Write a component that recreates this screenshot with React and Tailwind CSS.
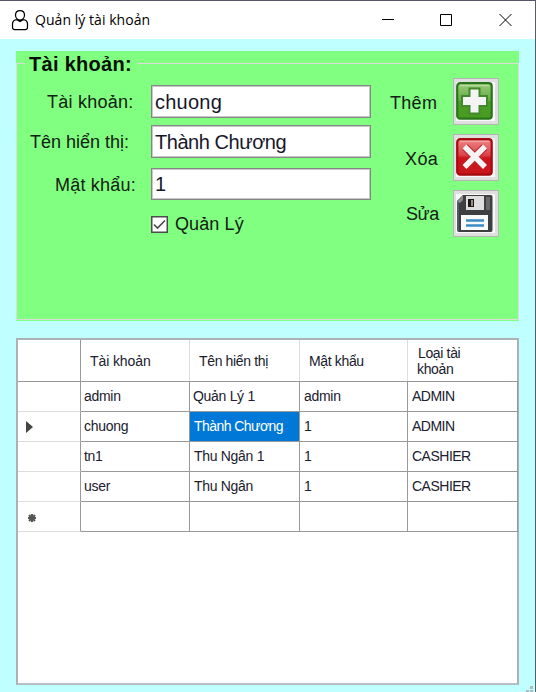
const fields = [
  { label: 'Tài khoản:', value: 'chuong', row: 'h-[33px] mb-[7px]', pad: 'pl-[29px]', shift: 'pl-[2px]', spacing: 'tracking-[0.25px]', field: 'tracking-[0.25px]' },
  { label: 'Tên hiển thị:', value: 'Thành Chương', row: 'h-[33px] mb-[10px]', pad: 'pl-[12px]', shift: 'pl-[2px]', spacing: 'tracking-[0px]', field: 'tracking-[-0.45px]' },
  { label: 'Mật khẩu:', value: '1', row: 'h-[32px]', pad: 'pl-[37px]', shift: 'pl-[2px]', spacing: 'tracking-[0.2px]', field: '' },
];

const rows = [
  { mark: '', cells: ['admin', 'Quản Lý 1', 'admin', 'ADMIN'] },
  { mark: 'current', cells: ['chuong', 'Thành Chương', '1', 'ADMIN'] },
  { mark: '', cells: ['tn1', 'Thu Ngân 1', '1', 'CASHIER'] },
  { mark: '', cells: ['user', 'Thu Ngân', '1', 'CASHIER'] },
  { mark: 'new', cells: ['', '', '', ''] },
];

function AddIcon() {
  return (
    <svg width="38" height="39" viewBox="0 0 38 39">
      <defs>
        <linearGradient id="add" x2="0" y2="1">
          <stop stopColor="#9acb7b" /><stop offset=".48" stopColor="#65ad43" /><stop offset=".52" stopColor="#4a9e25" /><stop offset="1" stopColor="#479b20" />
        </linearGradient>
      </defs>
      <rect x="1.2" y="1.2" width="34.500" height="35.500" rx="3" fill="url(#add)" stroke="#28761b" strokeWidth="2.2" />
      <path d="M4 3.500H33" stroke="#b7dc9b" strokeWidth="1.5" />
      <path d="M12.500 5.500h12v7.500h7.500v12h-7.500v7.500h-12v-7.500H5v-12h7.500z" fill="#43882d" />
      <path d="M14.500 7.500h8v7.500h7.500v8h-7.500v7.500h-8v-7.500H7v-8h7.500z" fill="#f4f4f4" />
    </svg>
  );
}

function DeleteIcon() {
  return (
    <svg width="38" height="39" viewBox="0 0 38 39">
      <defs>
        <linearGradient id="del" x2="0" y2="1">
          <stop stopColor="#ee8585" /><stop offset=".45" stopColor="#dc4349" /><stop offset=".53" stopColor="#cc141b" /><stop offset="1" stopColor="#c8161b" />
        </linearGradient>
      </defs>
      <rect x="1.2" y="1.2" width="34.500" height="35.500" rx="3" fill="url(#del)" stroke="#a4090e" strokeWidth="2.2" />
      <path d="M4 3.500H33" stroke="#f4a4a4" strokeWidth="1.2" />
      <path d="M9 9L28.500 28.500M28.500 9L9 28.500" stroke="#b9282e" strokeWidth="7.500" />
      <path d="M8.500 8.500L29 29M29 8.500L8.500 29" stroke="#f5f3f3" strokeWidth="5.500" />
    </svg>
  );
}

function SaveIcon() {
  return (
    <svg width="38" height="39" viewBox="0 0 38 39">
      <path d="M7 1H35Q36.500 1 36.500 3V36Q36.500 38 35 38H3Q1 38 1 36V7z" fill="#3d3f41" />
      <path d="M1 8L7 1v5L4 9z" fill="#8b8d8f" />
      <path d="M2 8v29" stroke="#606264" strokeWidth="1.5" />
      <path d="M30 3h4v13h-4z" fill="#66686a" />
      <rect x="10" y="2" width="18" height="14" fill="#dedede" />
      <rect x="12" y="5" width="6" height="8" fill="#171717" />
      <rect x="15" y="6" width="2" height="6" fill="#9b8f80" />
      <rect x="5" y="21" width="27" height="15" fill="#f9fafc" />
      <path d="M10 26.500h18M10 31.500h18" stroke="#3b8bc4" strokeWidth="2.600" />
    </svg>
  );
}

function Action({ label, pad, Icon, className }) {
  return (
    <div className={`flex h-[47px] items-center justify-between ${className}`}>
      <span className={`whitespace-nowrap text-[18px] leading-6 ${pad}`}>{label}</span>
      <button className="flex h-[47px] w-[46px] border border-[#b4b4b4] bg-[#dfdfdf] p-[3px] pl-[2px]">
        <span className="block h-[39px] w-[39px] bg-[#f8f8f8]"><Icon /></span>
      </button>
    </div>
  );
}

export default function App() {
  return (
    <div className="flex h-[692px] w-[536px] flex-col overflow-hidden border-t border-r border-t-[#55556b] border-r-[#535f64] bg-[#c0ffff] font-['Liberation_Sans',sans-serif] text-[#142014]">
      <header className="flex h-[38px] shrink-0 items-center bg-white text-black">
        <svg className="ml-[11px]" width="18" height="22" viewBox="0 0 18 22" fill="none" stroke="black" strokeWidth="1.25">
          <path d="M9 1.500C6 1.500 4.500 3.500 4.500 6S6.200 11 9 11s4.500-2.500 4.500-5S12 1.500 9 1.500zM6 10.700c-3 .2-4.500 1.700-4.500 4.300v3.300c0 1.200.8 2.200 2 2.200h11c1.200 0 2-1 2-2.200V15c0-2.600-1.500-4.100-4.500-4.300M6 10.800l3 1.800 3-1.800" />
        </svg>
        <h1 className="ml-[6px] whitespace-nowrap font-['Open_Sans',sans-serif] text-[14px] leading-5 tracking-[0.05px]">Quản lý tài khoản</h1>
        <svg className="ml-auto mr-[23px]" width="131" height="14" viewBox="0 0 131 14" fill="none" stroke="black">
          <path d="M1 6.500h12M59.500 1.500h11v11h-11zM118.500 1l12 12M130.500 1l-12 12" />
        </svg>
      </header>

      <main className="flex flex-1 flex-col pt-3 pl-4">
        <section className="h-[270px] w-[503px] bg-[#80ff80] pt-[12px]">
          <div className="flex h-[257px] w-[503px] flex-col border border-[#dcdcdc]">
            <h2 className="-mt-[13px] ml-[8px] h-6 w-[112px] whitespace-nowrap bg-[#80ff80] pl-[4px] text-[20px] font-bold leading-[27px] tracking-[0.3px] text-[#051005]">Tài khoản:</h2>
            <div className="flex pl-px">
              <form className="w-[353px] pt-[10px]">
                {fields.map((f) => (
                  <div key={f.label} className={`flex items-center ${f.row}`}>
                    <label className={`w-[133px] shrink-0 whitespace-nowrap pt-px text-[18px] leading-6 ${f.pad} ${f.spacing}`}>{f.label}</label>
                    <div className={`flex h-full w-[220px] items-center border border-[#858585] bg-white text-[20px] leading-7 text-[#17172a] shadow-[inset_0_0_0_1px_#c8c8c8] ${f.shift} ${f.field}`}>
                      <span className="whitespace-nowrap pl-px">{f.value}</span>
                    </div>
                  </div>
                ))}
                <div className="mt-[12px] flex h-6 items-center pl-[133px]">
                  <svg width="17" height="17" viewBox="0 0 17 17" fill="none">
                    <rect x=".75" y=".75" width="15.5" height="15.5" fill="white" stroke="#4b4b4b" strokeWidth="1.5" />
                    <path d="M3 8.500l3.500 3.500L14 4.500" stroke="#484848" strokeWidth="1.600" />
                  </svg>
                  <span className="ml-[7px] whitespace-nowrap text-[18px] leading-6 tracking-[0.1px]">Quản Lý</span>
                </div>
              </form>
              <div className="ml-[19px] w-[109px] pt-[3px]">
                <Action label="Thêm" pad="pl-0 tracking-[0.3px] pt-[2px]" Icon={AddIcon} className="mb-[9px]" />
                <Action label="Xóa" pad="pl-[15px] tracking-[0.4px] pt-[2px]" Icon={DeleteIcon} className="mb-[9px]" />
                <Action label="Sửa" pad="pl-[16px] tracking-[-0.4px]" Icon={SaveIcon} className="" />
              </div>
            </div>
          </div>
        </section>

        <section className="mt-[17px] h-[347px] w-[503px] border-2 border-[#adb0b4] border-b-[#b6bdc3] bg-white text-[14px] text-[#20202c]">
          <div className="grid h-[42px] w-[500px] grid-cols-[63px_109px_110px_108px_110px] border-b border-[#999] leading-4 tracking-[-0.35px]">
            <span className="border-r border-[#999]" />
            <span className="flex items-center whitespace-nowrap border-r border-[#ddd] pt-px pl-[9px] tracking-[-0.1px]">Tài khoản</span>
            <span className="flex items-center whitespace-nowrap border-r border-[#ddd] pt-px pl-[9px]">Tên hiển thị</span>
            <span className="flex items-center whitespace-nowrap border-r border-[#ddd] pt-px pl-[9px]">Mật khẩu</span>
            <span className="pt-[5px] pl-[9px]"><span className="block pl-px">Loại tài</span><span className="block">khoản</span></span>
          </div>
          {rows.map((r, i) => (
            <div key={i} className="grid h-[30px] w-[500px] grid-cols-[63px_109px_110px_108px_110px] leading-4 tracking-[-0.3px]">
              <div className="flex items-center border-r border-r-[#999] border-b border-b-[#ddd]">
                {r.mark === 'current' && <svg className="ml-[8px]" width="7" height="12"><path d="M0 0L7 6 0 12z" fill="#444" /></svg>}
                {r.mark === 'new' && <svg className="mt-[2px] ml-[10px]" width="8" height="8" stroke="#555" strokeWidth="2"><path d="M4 0v8M0 4h8M1 1l6 6M7 1L1 7" /></svg>}
              </div>
              {r.cells.map((c, j) => (
                <div key={j} className={`flex items-center whitespace-nowrap border-r border-b border-r-[#999] border-b-[#999] pb-px ${i === 1 && j === 1 ? 'bg-[#0078d7] pl-[4px] tracking-[-0.55px] text-white' : j === 1 ? (i === 0 ? 'pl-[3px]' : 'pl-[4px]') : j === 2 ? 'pl-[4px]' : j === 3 ? 'pl-[4px] tracking-[-0.5px]' : 'pl-[3px]'}`}>{c}</div>
              ))}
            </div>
          ))}
        </section>
        <svg className="mr-[2px] ml-auto mt-px shrink-0" width="7" height="7" fill="#b6b9b9"><path d="M4 0h3v3H4zM0 4h3v3H0zM4 4h3v3H4z" /></svg>
      </main>
    </div>
  );
}
